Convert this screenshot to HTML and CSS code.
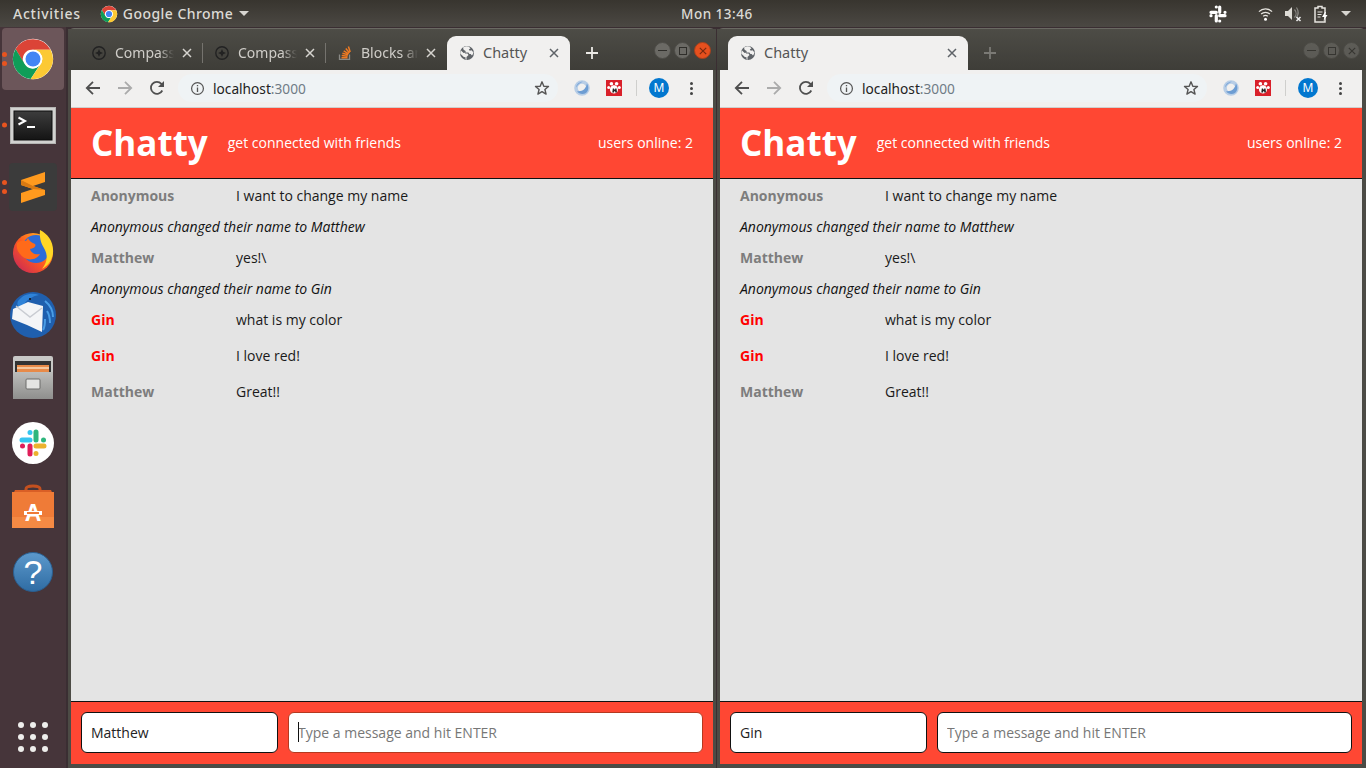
FILE: index.html
```html
<!DOCTYPE html>
<html lang="en">
<head>
<meta charset="utf-8">
<title>Chatty</title>
<link rel="stylesheet" href="styles.css">
</head>
<body>
<svg class="defs" aria-hidden="true">
  <defs>
    <symbol id="chrome" viewBox="0 0 48 48">
      <circle cx="24" cy="24" r="22" fill="#fff"/>
      <path fill="#db4437" d="M24 14h19.2A22 22 0 0 0 5 13l9.4 16.2A10 10 0 0 1 24 14z"/>
      <path fill="#0f9d58" d="M5 13a22 22 0 0 0 16.5 32.9l9.5-14.7A10 10 0 0 1 14.6 29z"/>
      <path fill="#fcc934" d="M43.2 14H24a10 10 0 0 1 8.7 15L21.5 45.9A22 22 0 0 0 43.2 14z"/>
      <circle cx="24" cy="24" r="10.2" fill="#fff"/>
      <circle cx="24" cy="24" r="8.2" fill="#4285f4"/>
    </symbol>
    <symbol id="compass" viewBox="0 0 16 16">
      <circle cx="8" cy="8" r="6.2" fill="none" stroke="#222" stroke-width="1.4"/>
      <path d="M8 4 9.2 6.8 12 8 9.2 9.2 8 12 6.8 9.2 4 8 6.8 6.8z" fill="#222"/>
    </symbol>
    <symbol id="globe" viewBox="0 0 16 16">
      <circle cx="8" cy="8" r="7" fill="#5f6368"/>
      <path fill="#f1f0ef" d="M7.2 1.3 4 2.6l.6 2.2 2 1.2V7.6l-2 .3L2 5.4a6 6 0 0 0-.8 3L4.8 12l1.7.2V14l1 1v-3l2-2-1-1.5H6V7.6h3.4l1 1.4h1.2L13 10.6a7 7 0 0 0 1.5-3L12.5 5.2 10.8 5.8 9.8 4.6 11.5 3.2 9.5 1.5z"/>
    </symbol>
    <symbol id="so" viewBox="0 0 16 16">
      <path fill="none" stroke="#8a8a86" stroke-width="1.3" d="M2.5 9.5V14.4H12.5V9.5"/>
      <path fill="none" stroke="#ef7a22" stroke-width="1.5" d="M4.5 12.8h6M4.7 10.6l5.9.6M5.4 8.2l5.7 1.6M6.7 5.8l5 3M8.8 3.6l3.7 4.4M11.4 1.6l1.8 5.4"/>
    </symbol>
    <symbol id="close" viewBox="0 0 10 10">
      <path d="M1 1l8 8M9 1 1 9" fill="none" stroke="currentColor" stroke-width="1.5"/>
    </symbol>
    <symbol id="plus" viewBox="0 0 12 12">
      <path d="M6 0v12M0 6h12" fill="none" stroke="currentColor" stroke-width="1.8"/>
    </symbol>
    <symbol id="back" viewBox="0 0 16 16">
      <path d="M15 8H2M8 1.8 1.8 8 8 14.2" fill="none" stroke="currentColor" stroke-width="1.8"/>
    </symbol>
    <symbol id="forward" viewBox="0 0 16 16">
      <path d="M1 8h13M8 1.8 14.2 8 8 14.2" fill="none" stroke="currentColor" stroke-width="1.8"/>
    </symbol>
    <symbol id="reload" viewBox="0 0 16 16">
      <path d="M13.3 10.5A6 6 0 1 1 12.4 3.8L14 5.4" fill="none" stroke="currentColor" stroke-width="1.8"/>
      <path d="M15 1v6H9z" fill="currentColor"/>
    </symbol>
    <symbol id="info" viewBox="0 0 16 16">
      <circle cx="8" cy="8" r="6.3" fill="none" stroke="currentColor" stroke-width="1.3"/>
      <path d="M7.3 7h1.4v4.6H7.3zM7.3 4.3h1.4v1.4H7.3z" fill="currentColor"/>
    </symbol>
    <symbol id="star" viewBox="0 0 16 16">
      <path d="M8 1.8 9.8 6.2l4.7.3-3.6 3 1.2 4.6L8 11.6l-4.1 2.5 1.2-4.6-3.6-3 4.7-.3z" fill="none" stroke="currentColor" stroke-width="1.4" stroke-linejoin="round"/>
    </symbol>
    <symbol id="swirl" viewBox="0 0 16 16">
      <circle cx="8" cy="8" r="6" fill="none" stroke="#b7cde6" stroke-width="3.6"/>
      <path d="M3 11.5C5 14 9 14.8 12 13 14.8 10.6 15 6 12.8 3.4 12.5 7 10 10.5 6.3 11 5 11.3 3.8 11.5 3 11.5z" fill="#6d9dd3"/>
      <path d="M9 1.8C5.5 1.5 2.3 4 2 7.5 3.5 5 6 3 9 1.8z" fill="#7fa9da"/>
    </symbol>
    <symbol id="paw" viewBox="0 0 16 16">
      <rect width="16" height="16" fill="#d9202a"/>
      <g fill="#fff">
        <circle cx="5.4" cy="3.8" r="1.8"/>
        <circle cx="10.6" cy="3.8" r="1.8"/>
        <circle cx="2.7" cy="7.4" r="1.5"/>
        <circle cx="13.3" cy="7.4" r="1.5"/>
        <path d="M8 5.2c2.8 0 4.4 2.6 3.900 5.200-.3 1.800-2.200 3-3.900 3s-3.600-1.200-3.900-3C3.600 7.800 5.200 5.200 8 5.200z"/>
      </g>
      <path d="M6.800 8.400h1.300v1.200h1.100V8.400h1.300l.5 4.200H9.200v-1.400H8.100v1.400H6.300z" fill="#222"/>
    </symbol>
  </defs>
</svg>

<header class="topbar">
  <div class="top-left">
    <span class="top-item activities">Activities</span>
    <span class="top-app">
      <svg class="i18"><use href="#chrome"/></svg>
      <span class="top-item">Google Chrome</span>
      <span class="caret"></span>
    </span>
  </div>
  <span class="top-clock">Mon 13:46</span>
  <div class="top-right">
    <svg class="tray-slack" viewBox="0 0 20 20"><g stroke="#fff" stroke-width="3.2" stroke-linecap="round" fill="none"><path d="M3 8.3h5.300M8.300 3v.01"/><path d="M11.700 3v5.300M17 8.300h.01"/><path d="M11.700 11.700H17M11.700 17v.01"/><path d="M8.300 11.700V17M3 11.700h.01"/></g></svg>
    <svg class="tray-wifi" viewBox="0 0 16 16"><path d="M1 6a10 10 0 0 1 14 0M3.300 8.500a7 7 0 0 1 9.400 0M5.500 11a4 4 0 0 1 5 0" fill="none" stroke="#e6e4df" stroke-width="1.3"/><circle cx="8" cy="14" r="1.6" fill="#fff"/></svg>
    <svg class="tray-vol" viewBox="0 0 18 16"><path d="M1 5h3l4-4v13l-4-4H1z" fill="#dedcd6"/><path d="M10.500 3.500a6 6 0 0 1 0 8M12.500 1.500a9 9 0 0 1 0 10" fill="none" stroke="#8a8884" stroke-width="1.2"/><path d="M12.500 11l4 4M16.500 11l-4 4" stroke="#eee" stroke-width="1.5"/></svg>
    <svg class="tray-bat" viewBox="0 0 16 18"><path d="M2 3h3V1.500h4V3h3v14H2z" fill="none" stroke="#e6e4df" stroke-width="1.5"/><path d="M4.500 7h5M4.500 9.500h4M4.500 12h3" stroke="#e6e4df" stroke-width="1.2"/><path d="M12 7l-3 5h2.500l-1 4 4-6h-2.500l1-3z" fill="#fff"/></svg>
    <span class="caret"></span>
  </div>
</header>

<nav class="dock">
  <div class="dock-item active">
    <span class="pips"><i></i><i></i></span>
    <svg class="i44"><use href="#chrome"/></svg>
  </div>
  <div class="dock-item">
    <span class="pips"><i></i></span>
    <svg class="i46" viewBox="0 0 46 37"><rect width="46" height="37" fill="#d2d2d0"/><rect x=".5" y=".5" width="45" height="36" fill="none" stroke="#b5b5b3"/><defs><linearGradient id="term" x1="0" y1="0" x2="0" y2="1"><stop offset="0" stop-color="#3d3d3d"/><stop offset="1" stop-color="#141414"/></linearGradient></defs><rect x="4" y="4" width="38" height="29" fill="url(#term)" stroke="#0c0c0c"/><path d="M8.500 10.500l6.500 3.500-6.500 3.500" fill="none" stroke="#fff" stroke-width="2"/><path d="M17 20h8" stroke="#fff" stroke-width="2"/></svg>
  </div>
  <div class="dock-item">
    <span class="pips"><i></i><i></i></span>
    <svg class="i48" viewBox="0 0 48 48"><rect width="48" height="48" rx="4" fill="#3b3b3b"/><path d="M12 17 36 9v10l-12 4 12 4v5L12 40V30l12-4-12-4z" fill="#ff9a1e"/><path d="M12 17v5l12 4 12 1v0l-12-4z" fill="#d97a12"/></svg>
  </div>
  <div class="dock-item">
    <svg class="i44" viewBox="0 0 44 44">
      <defs>
        <linearGradient id="ffa" x1="0" y1="1" x2="1" y2="0"><stop offset="0" stop-color="#c2205f"/><stop offset=".5" stop-color="#ff5a1f"/><stop offset="1" stop-color="#ffcf22"/></linearGradient>
      </defs>
      <circle cx="22" cy="24" r="20" fill="url(#ffa)"/>
      <circle cx="25" cy="20" r="14" fill="#2c6cd8"/>
      <path d="M29 1c8 4 14 12 13 23-1 7-5 13-11 16 5-6 6-13 3-19-2-4-6-8-5-20z" fill="#ffd726"/>
      <path d="M6 14c3-2 5-3 9-2l2-3c1 3 4 5 7 6 2 3-3 5-5 5 1 4 5 6 10 5-3 6-12 7-17 3S5 20 6 14z" fill="#ff6a1a"/>
    </svg>
  </div>
  <div class="dock-item">
    <svg class="i48" viewBox="0 0 48 48">
      <circle cx="24" cy="24" r="23" fill="#1f5fae"/>
      <path d="M9 10c5-7 14-9 21-6-6 1-11 4-14 8l-5 5c-3-2-3-5-2-7z" fill="#2f83d8"/>
      <path d="M36 10c5 4 8 10 8 16M38 20c2 3 3 7 3 12M36 28c0 4 0 8-2 11" fill="none" stroke="#4a9de6" stroke-width="2"/>
      <path d="M4 18 19 11l15 4-1 26-15-7-15-6z" fill="#f4f5f7"/>
      <path d="M7 15 21 26l12-9" fill="none" stroke="#c9ccd2" stroke-width="1.5"/>
      <circle cx="21" cy="8" r="1" fill="#111"/>
    </svg>
  </div>
  <div class="dock-item">
    <svg class="i42b" viewBox="0 0 42 44"><defs><linearGradient id="cab" x1="0" y1="0" x2="0" y2="1"><stop offset="0" stop-color="#bdbdbb"/><stop offset="1" stop-color="#8f8f8d"/></linearGradient></defs><rect x="1" y="0" width="40" height="42" rx="2" fill="#c8c8c6"/><rect x="3" y="5" width="36" height="11" fill="#333"/><rect x="5" y="9" width="32" height="7" fill="#e88a48"/><rect x="5" y="11" width="32" height="2" fill="#f4c79e"/><rect x="1" y="16" width="40" height="27" fill="url(#cab)"/><rect x="14" y="23" width="14" height="10" rx="1" fill="#e4e4e2" stroke="#6c6c6a"/></svg>
  </div>
  <div class="dock-item">
    <svg class="i42" viewBox="0 0 42 42"><circle cx="21" cy="21" r="21" fill="#fff"/><g fill="none" stroke-width="5" stroke-linecap="round"><path d="M10 18h8M18 10.500v.01" stroke="#36c5f0"/><path d="M24 10v8M31.500 18h.01" stroke="#2eb67d"/><path d="M24 24h8M24 31.500v.01" stroke="#ecb22e"/><path d="M18 24v8M10.500 24h.01" stroke="#e01e5a"/></g></svg>
  </div>
  <div class="dock-item">
    <svg class="i42b" viewBox="0 0 42 44">
      <path d="M14 10V5c0-4 14-4 14 0v5" fill="none" stroke="#c4501f" stroke-width="3"/>
      <path d="M3 6h36l3 7H0z" fill="#d95f26"/>
      <rect y="8" width="42" height="36" fill="#ef7b37"/>
      <rect y="33" width="42" height="11" fill="#f58a44"/>
      <text x="21" y="37" class="bag-a">A</text>
      <rect x="12" y="27" width="18" height="4" fill="#fff"/>
      <rect x="15" y="28" width="12" height="2" fill="#ef7b37"/>
    </svg>
  </div>
  <div class="dock-item">
    <svg class="i40" viewBox="0 0 40 40"><defs><linearGradient id="hlp" x1="0" y1="0" x2="0" y2="1"><stop offset="0" stop-color="#5c99cc"/><stop offset="1" stop-color="#2f6ca3"/></linearGradient></defs><circle cx="20" cy="20" r="19.5" fill="url(#hlp)" stroke="#2a5f90"/><text x="20" y="32" class="help-q">?</text></svg>
  </div>
  <div class="dock-spacer"></div>
  <div class="dock-grid">
    <i></i><i></i><i></i><i></i><i></i><i></i><i></i><i></i><i></i>
  </div>
</nav>

<section class="window win-one">
  <div class="tabbar">
    <div class="tab bg">
      <svg class="i16"><use href="#compass"/></svg>
      <span class="tab-title fade">Compass</span>
      <svg class="tab-x"><use href="#close"/></svg>
    </div>
    <span class="tab-sep"></span>
    <div class="tab bg">
      <svg class="i16"><use href="#compass"/></svg>
      <span class="tab-title fade">Compass</span>
      <svg class="tab-x"><use href="#close"/></svg>
    </div>
    <span class="tab-sep"></span>
    <div class="tab bg last">
      <svg class="i16"><use href="#so"/></svg>
      <span class="tab-title fade">Blocks and</span>
      <svg class="tab-x"><use href="#close"/></svg>
    </div>
    <div class="tab current">
      <svg class="i16"><use href="#globe"/></svg>
      <span class="tab-title">Chatty</span>
      <svg class="tab-x dark"><use href="#close"/></svg>
    </div>
    <svg class="new-tab"><use href="#plus"/></svg>
    <div class="controls">
      <span class="ctl min"><i class="glyph-min"></i></span>
      <span class="ctl max"><i class="glyph-max"></i></span>
      <span class="ctl shut"><svg class="glyph-x"><use href="#close"/></svg></span>
    </div>
  </div>
  <div class="toolbar">
    <svg class="nav"><use href="#back"/></svg>
    <svg class="nav off"><use href="#forward"/></svg>
    <svg class="nav"><use href="#reload"/></svg>
    <div class="omnibox">
      <svg class="omni-info"><use href="#info"/></svg>
      <span class="url">localhost<span class="port">:3000</span></span>
      <svg class="omni-star"><use href="#star"/></svg>
    </div>
    <svg class="ext"><use href="#swirl"/></svg>
    <svg class="ext"><use href="#paw"/></svg>
    <span class="tool-sep"></span>
    <span class="avatar">M</span>
    <span class="kebab"><i></i><i></i><i></i></span>
  </div>
  <div class="page">
    <div class="chat-head">
      <h1>Chatty</h1>
      <span class="tagline">get connected with friends</span>
      <span class="online">users online: 2</span>
    </div>
    <main class="messages">
      <div class="msg"><span class="who grey">Anonymous</span><span>I want to change my name</span></div>
      <div class="note">Anonymous changed their name to Matthew</div>
      <div class="msg"><span class="who grey">Matthew</span><span>yes!\</span></div>
      <div class="note">Anonymous changed their name to Gin</div>
      <div class="msg"><span class="who red">Gin</span><span>what is my color</span></div>
      <div class="msg tall"><span class="who red">Gin</span><span>I love red!</span></div>
      <div class="msg tall"><span class="who grey">Matthew</span><span>Great!!</span></div>
    </main>
    <footer class="composer">
      <input class="name" value="Matthew" aria-label="Name">
      <div class="text-wrap">
        <input class="text focus" placeholder="Type a message and hit ENTER" aria-label="Message">
        <span class="cursor"></span>
      </div>
    </footer>
  </div>
</section>

<section class="window win-two">
  <div class="tabbar">
    <div class="tab current wide">
      <svg class="i16"><use href="#globe"/></svg>
      <span class="tab-title">Chatty</span>
      <svg class="tab-x dark"><use href="#close"/></svg>
    </div>
    <svg class="new-tab dim"><use href="#plus"/></svg>
    <div class="controls unfocused">
      <span class="ctl min"><i class="glyph-min"></i></span>
      <span class="ctl max"><i class="glyph-max"></i></span>
      <span class="ctl"><svg class="glyph-x"><use href="#close"/></svg></span>
    </div>
  </div>
  <div class="toolbar">
    <svg class="nav"><use href="#back"/></svg>
    <svg class="nav off"><use href="#forward"/></svg>
    <svg class="nav"><use href="#reload"/></svg>
    <div class="omnibox">
      <svg class="omni-info"><use href="#info"/></svg>
      <span class="url">localhost<span class="port">:3000</span></span>
      <svg class="omni-star"><use href="#star"/></svg>
    </div>
    <svg class="ext"><use href="#swirl"/></svg>
    <svg class="ext"><use href="#paw"/></svg>
    <span class="tool-sep"></span>
    <span class="avatar">M</span>
    <span class="kebab"><i></i><i></i><i></i></span>
  </div>
  <div class="page">
    <div class="chat-head">
      <h1>Chatty</h1>
      <span class="tagline">get connected with friends</span>
      <span class="online">users online: 2</span>
    </div>
    <main class="messages">
      <div class="msg"><span class="who grey">Anonymous</span><span>I want to change my name</span></div>
      <div class="note">Anonymous changed their name to Matthew</div>
      <div class="msg"><span class="who grey">Matthew</span><span>yes!\</span></div>
      <div class="note">Anonymous changed their name to Gin</div>
      <div class="msg"><span class="who red">Gin</span><span>what is my color</span></div>
      <div class="msg tall"><span class="who red">Gin</span><span>I love red!</span></div>
      <div class="msg tall"><span class="who grey">Matthew</span><span>Great!!</span></div>
    </main>
    <footer class="composer">
      <input class="name" value="Gin" aria-label="Name">
      <div class="text-wrap">
        <input class="text" placeholder="Type a message and hit ENTER" aria-label="Message">
      </div>
    </footer>
  </div>
</section>
</body>
</html>
```

FILE: styles.css
```css
* { box-sizing: border-box; }
html, body { margin: 0; height: 100%; }
body {
  width: 1366px;
  height: 768px;
  overflow: hidden;
  position: relative;
  background: #3a2e32;
  font-family: "Open Sans", sans-serif;
}
.defs { position: absolute; width: 0; height: 0; }

/* top bar */
.topbar {
  height: 27px;
  display: grid;
  grid-template-columns: 681px auto 1fr;
  align-items: center;
  background: linear-gradient(#38352f, #4b4843);
  color: #dcdad5;
  font-family: "Noto Sans", sans-serif;
  font-size: 14px;
  font-weight: 500;
  letter-spacing: .45px;
}
.top-left { display: flex; align-items: center; gap: 19px; padding-left: 13px; }
.activities { letter-spacing: .75px; }
.top-app { display: flex; align-items: center; gap: 5px; }
.top-clock { font-size: 13.5px; letter-spacing: .5px; }
.top-right { display: flex; align-items: center; justify-content: flex-end; padding-right: 15px; }
.caret { width: 0; height: 0; border: 5px solid transparent; border-top: 5px solid #d8d6d1; border-bottom: 0; margin-left: 1px; }
.i18 { width: 18px; height: 18px; }
.tray-slack { width: 20px; height: 20px; margin-right: 30px; }
.tray-wifi { width: 15px; height: 15px; margin-right: 11px; }
.tray-vol { width: 18px; height: 16px; margin-right: 11px; }
.tray-bat { width: 16px; height: 18px; margin-right: 11px; }

/* dock */
.dock {
  position: absolute;
  left: 0;
  top: 27px;
  width: 66px;
  height: 741px;
  background: #46353a;
  display: flex;
  flex-direction: column;
  align-items: center;
  padding: 1px 2px 16px;
}
.dock-item {
  position: relative;
  width: 62px;
  height: 62px;
  flex: none;
  display: flex;
  align-items: center;
  justify-content: center;
  border-radius: 4px;
}
.dock-item:nth-child(2) { margin-top: 4px; }
.dock-item:nth-child(4) { margin-top: 2px; }
.dock-item:nth-child(5) { margin-top: 2px; }
.dock-item:nth-child(6) { margin-top: 1px; }
.dock-item:nth-child(7) { margin-top: 3px; }
.dock-item:nth-child(8) { margin-top: 1px; }
.dock-item:nth-child(9) { margin-top: 4px; }
.dock-item.active { background: #6c565a; }
.pips { position: absolute; left: 0; top: 50%; transform: translateY(-50%); display: flex; flex-direction: column; gap: 4px; }
.pips i { width: 5px; height: 5px; border-radius: 50%; background: #e9541f; display: block; }
.i44 { width: 44px; height: 44px; }
.i46 { width: 46px; height: 37px; }
.i48 { width: 48px; height: 48px; }
.i40 { width: 40px; height: 40px; }
.i42 { width: 42px; height: 42px; }
.i42b { width: 42px; height: 44px; }
.bag-a { font: 700 23px "Liberation Sans", sans-serif; fill: #fff; text-anchor: middle; }
.help-q { font: 400 34px "Liberation Sans", sans-serif; fill: #fff; text-anchor: middle; }
.dock-spacer { flex: 1; }
.dock-grid { display: grid; grid-template-columns: repeat(3, 6px); gap: 6px; }
.dock-grid i { width: 6px; height: 6px; border-radius: 50%; background: #eeeeec; display: block; }

/* chrome window */
.window {
  position: absolute;
  top: 28px;
  height: 740px;
  display: flex;
  flex-direction: column;
  background: #4c4b45;
  border-radius: 6px 6px 0 0;
  border-top: 1px solid #6a6963;
}
.win-one { left: 68px; width: 648px; padding: 0 3px 4px; }
.win-two { left: 717px; width: 649px; padding: 0 4px 4px 3px; }

.tabbar {
  height: 41px;
  flex: none;
  display: flex;
  align-items: flex-end;
  position: relative;
  margin: 0 -3px;
  padding-left: 12px;
  background: linear-gradient(#4d4c46, #3e3d38);
  color: #e6e4df;
  font-family: "Noto Sans", sans-serif;
  font-size: 14px;
}
.win-two .tabbar { padding-left: 11px; margin-right: -4px; }
.tab {
  height: 34px;
  width: 122px;
  display: flex;
  align-items: center;
  padding: 0 10px 0 11px;
  flex: none;
  border-radius: 9px 9px 0 0;
}
.tab.last { width: 121px; padding-right: 11px; }
.tab.current { background: #f1f0ef; color: #555; width: 123px; padding: 0 11px 0 12px; }
.tab.wide { width: 240px; }
.tab-title { margin: 0 0 2px 8px; flex: 1; overflow: hidden; white-space: nowrap; }
.tab.current .tab-title { font-size: 14.5px; }
.tab-title.fade {
  -webkit-mask-image: linear-gradient(to right, #000 75%, transparent 100%);
  mask-image: linear-gradient(to right, #000 75%, transparent 100%);
  color: #cfcdc8;
}
.i16 { width: 16px; height: 16px; flex: none; }
.tab-x { width: 10px; height: 10px; margin-left: 8px; flex: none; color: #d6d4cf; }
.tab-x.dark { color: #5f6368; }
.tab-sep { width: 1px; height: 20px; background: #75736e; margin: 0 0 7px; flex: none; }
.new-tab { width: 12px; height: 12px; margin: 0 0 11px 16px; flex: none; color: #eceae6; }
.new-tab.dim { color: #7b7a75; }
.controls { position: absolute; right: 5px; top: 13px; display: flex; gap: 3px; }
.ctl {
  width: 17px; height: 17px; border-radius: 50%;
  background: #6b6a65;
  display: flex; align-items: center; justify-content: center;
  color: #2f2e2a;
  border: 1px solid #4d4c47;
}
.ctl.shut { background: #e6501e; color: #7a2a10; border-color: #a8411c; }
.glyph-min { width: 9px; height: 1px; background: currentColor; display: block; }
.glyph-max { width: 8px; height: 8px; border: 1px solid currentColor; display: block; }
.glyph-x { width: 8px; height: 8px; }
.unfocused { opacity: .62; right: 6px; }

.toolbar {
  height: 38px;
  flex: none;
  display: flex;
  align-items: center;
  background: #f1f0ef;
  border-bottom: 1px solid #cfcfcd;
  padding: 0 0 1px 14px;
  color: #555;
}
.nav { width: 16px; height: 16px; margin-right: 16px; flex: none; color: #4f4f4f; }
.nav.off { color: #ababab; }
.omnibox {
  width: 380px;
  height: 28px;
  margin-left: -3px;
  background: #eff3f5;
  border-radius: 14px;
  display: flex;
  align-items: center;
  padding: 0 8px 0 12px;
  flex: none;
}
.omni-info { width: 15px; height: 15px; color: #555; flex: none; }
.url { margin-left: 8px; font: 13.7px "Noto Sans", sans-serif; color: #222; flex: 1; }
.port { color: #6f7b85; }
.omni-star { width: 16px; height: 16px; color: #555; flex: none; }
.ext { width: 16px; height: 16px; margin-left: 16px; flex: none; }
.tool-sep { width: 1px; height: 16px; background: #cfcfcd; margin: 0 12px 0 14px; flex: none; }
.avatar {
  width: 20px; height: 20px; border-radius: 50%;
  background: #0277cf; color: #fff;
  font: 12px/20px "Noto Sans", sans-serif;
  text-align: center;
  flex: none;
}
.kebab { display: flex; flex-direction: column; gap: 2px; margin-left: 21px; flex: none; }
.kebab i { width: 3px; height: 3px; border-radius: 50%; background: #444; display: block; }

/* page */
.page { flex: 1; min-height: 0; display: flex; flex-direction: column; }
.chat-head {
  height: 71px;
  flex: none;
  display: flex;
  align-items: center;
  padding: 0 20px;
  background: #ff4733;
  color: #fff;
  border-bottom: 1px solid #111;
}
.chat-head h1 { margin: 0 0 2px; font-size: 35px; font-weight: 700; line-height: 1; }
.tagline { margin: 0 0 1px 20px; font-size: 14px; flex: 1; }
.online { font-size: 14px; margin-bottom: 1px; }
.messages {
  flex: 1;
  min-height: 0;
  background: #e4e4e4;
  padding: 1px 20px 0;
  font-size: 14px;
  color: #1a1a1a;
}
.msg, .note { height: 31px; display: flex; align-items: center; }
.msg.tall { height: 36px; }
.msg + .msg.tall { margin-top: 2px; }
.msg.tall + .msg.tall { margin-top: 0; }
.who { width: 145px; flex: none; font-weight: 700; }
.grey { color: #7d7d7d; }
.red { color: #ff0000; }
.note { font-style: italic; color: #111; }
.composer {
  height: 63px;
  flex: none;
  display: flex;
  gap: 10px;
  align-items: flex-start;
  padding: 10px 10px 0;
  background: #ff4733;
  border-top: 1px solid #111;
}
.composer input {
  height: 41px;
  border: 1px solid #111;
  border-radius: 6px;
  background: #fff;
  padding: 0 9px;
  font: 14px "Open Sans", sans-serif;
  color: #222;
  outline: none;
}
.composer input::placeholder { color: #777; opacity: 1; }
.name { width: 197px; flex: none; }
.text-wrap { flex: 1; position: relative; display: flex; }
.text { width: 100%; }
.text.focus { border-color: #b5391f; }
.cursor { position: absolute; left: 10px; top: 10px; width: 1px; height: 20px; background: #111; }
```
